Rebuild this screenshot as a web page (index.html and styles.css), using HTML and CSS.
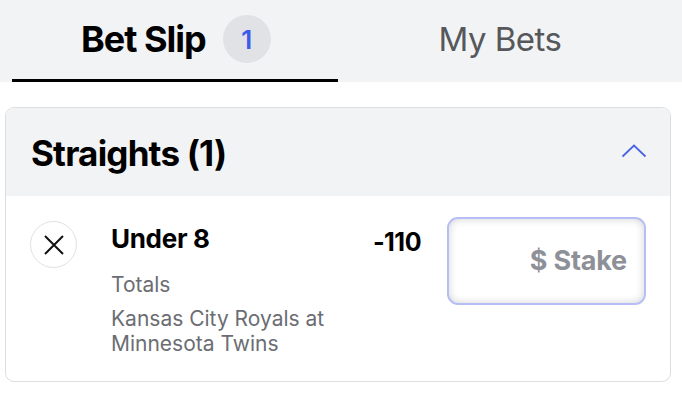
FILE: index.html
```html
<!DOCTYPE html>
<html>
<head>
<meta charset="utf-8">
<link rel="stylesheet" href="styles.css">
</head>
<body>
<div class="tabs">
  <div class="tab tab-active">
    <span class="tab-label">Bet Slip</span>
    <span class="badge">1</span>
  </div>
  <div class="tab tab-other">
    <span class="tab-label">My Bets</span>
  </div>
</div>
<div class="card">
  <div class="card-head">
    <span class="card-title">Straights (1)</span>
    <svg class="chevron" width="26" height="14" viewBox="0 0 26 14"><path d="M1.5 12.5 L13 1.5 L24.5 12.5" fill="none" stroke="#4a63e6" stroke-width="1.8"/></svg>
  </div>
  <div class="card-body">
    <div class="remove">
      <svg width="20" height="20" viewBox="0 0 20 20"><path d="M1 1 L19 19 M19 1 L1 19" stroke="#111" stroke-width="2" fill="none"/></svg>
    </div>
    <div class="info">
      <div class="pick">Under 8</div>
      <div class="market">Totals</div>
      <div class="event">Kansas City Royals at<br>Minnesota Twins</div>
    </div>
    <div class="odds">-110</div>
    <div class="stake">$ Stake</div>
  </div>
</div>
</body>
</html>
```

FILE: styles.css
```css
body {
  margin: 0;
  background: #fff;
  font-family: Inter, "Noto Sans", sans-serif;
  color: #111;
}
.tabs {
  display: flex;
  background: #f2f3f5;
  height: 82px;
  padding: 0 12px;
  box-sizing: border-box;
}
.tab {
  display: flex;
  align-items: center;
  box-sizing: border-box;
  height: 82px;
}
.tab-active {
  width: 326px;
  padding-left: 69px;
  border-bottom: 3px solid #000;
  padding-bottom: 1px;
}
.tab-active .tab-label {
  font-weight: 700;
  font-size: 36px;
  letter-spacing: -1px;
  color: #000;
}
.badge {
  margin-left: 17px;
  width: 48px;
  height: 48px;
  border-radius: 50%;
  background: #e1e2e6;
  color: #3b5ce6;
  font-size: 26px;
  font-weight: 600;
  display: flex;
  align-items: center;
  justify-content: center;
}
.tab-other {
  flex: 1;
  justify-content: center;
  padding-right: 8px;
  padding-bottom: 4px;
}
.tab-other .tab-label {
  font-size: 33px;
  color: #56575b;
  font-weight: 400;
  letter-spacing: -0.5px;
}
.card {
  margin: 25px 11px 0 5px;
  border: 1px solid #dcdde1;
  border-radius: 9px;
  overflow: hidden;
}
.card-head {
  height: 88px;
  background: #f2f3f5;
  display: flex;
  align-items: center;
  justify-content: space-between;
  padding: 0 23px 0 25px;
}
.card-title {
  font-weight: 700;
  font-size: 35px;
  letter-spacing: -0.8px;
  color: #000;
  margin-top: 2px;
}
.chevron {
  margin-top: -2px;
}
.card-body {
  display: flex;
  align-items: flex-start;
  padding: 24px 24px 25px 24px;
  height: 185px;
  box-sizing: border-box;
}
.remove {
  width: 47px;
  height: 47px;
  box-sizing: border-box;
  margin-top: 1px;
  border: 1.5px solid #dfe0e4;
  border-radius: 50%;
  display: flex;
  align-items: center;
  justify-content: center;
  flex-shrink: 0;
}
.info {
  margin-left: 34px;
  flex: 1;
}
.pick {
  margin-top: 3px;
  font-size: 26px;
  font-weight: 700;
  line-height: 32px;
  letter-spacing: -0.3px;
  color: #000;
}
.market {
  margin-top: 17px;
  font-size: 21px;
  color: #6b6d73;
  line-height: 25px;
}
.event {
  margin-top: 9px;
  font-size: 21px;
  color: #6b6d73;
  line-height: 25px;
}
.odds {
  font-size: 25px;
  font-weight: 700;
  letter-spacing: -0.5px;
  line-height: 32px;
  margin-top: 6px;
  margin-right: 26px;
  color: #000;
}
.stake {
  width: 199px;
  height: 88px;
  box-sizing: border-box;
  margin-top: -3px;
  border: 2px solid #b6bef5;
  border-radius: 11px;
  box-shadow: inset 0 0 8px rgba(0,0,0,0.18);
  display: flex;
  align-items: center;
  justify-content: flex-end;
  padding-right: 17px;
  padding-bottom: 2px;
  font-size: 27px;
  font-weight: 700;
  color: #8e9097;
  letter-spacing: -0.2px;
}
```
